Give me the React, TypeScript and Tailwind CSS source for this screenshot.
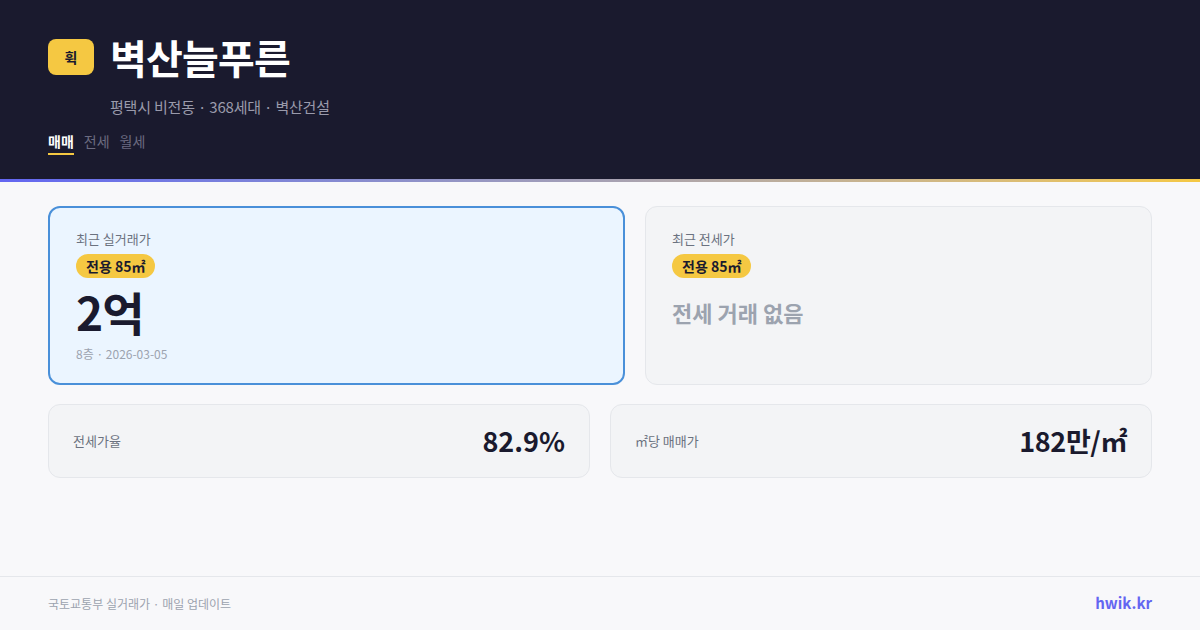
import React from "react";

const font = { fontFamily: '"Noto Sans CJK KR", "Noto Sans", sans-serif' };

export default function App() {
  return (
    <div className="w-[1200px] h-[630px] flex flex-col bg-[#f8f8fa]" style={font}>
      <header className="h-[179px] bg-[#1a1a2e] px-12 pt-[39px]">
        <div className="flex items-center gap-4 h-9">
          <div className="w-[46px] h-9 rounded-lg bg-[#f5c842] flex items-center justify-center text-[14px] font-bold text-[#1a1a2e]">
            휙
          </div>
          <h1 className="text-[40px] leading-[36px] font-bold text-white tracking-[-0.8px]">벽산늘푸른</h1>
        </div>
        <div className="pl-[62px] mt-[22px] text-[15px] leading-5 tracking-[-0.2px] text-[#9a9aab]">
          평택시 비전동 · 368세대 · 벽산건설
        </div>
        <div className="flex gap-[10px] mt-[15px] text-[14px] leading-[18px]">
          <span className="pb-[3px] border-b-2 border-[#f5c842] text-white font-bold">매매</span>
          <span className="pb-[3px] border-b-2 border-transparent text-[#6b6b80]">전세</span>
          <span className="pb-[3px] border-b-2 border-transparent text-[#6b6b80]">월세</span>
        </div>
      </header>
      <div className="h-[3px] bg-gradient-to-r from-[#6366f1] to-[#f5c842]" />
      <main className="flex-1 px-12 pt-6">
        <div className="flex gap-5">
          <div className="w-[577px] h-[179px] rounded-xl border-2 border-[#4a90d9] bg-[#ebf5ff] px-[26px] pt-[22px]">
            <div className="text-[13px] leading-[18px] text-[#6b7280]">최근 실거래가</div>
            <div className="mt-[6px] inline-block rounded-full bg-[#f5c842] px-[10px] py-1 text-[14px] leading-4 font-semibold text-[#1a1a2e]">
              전용 85㎡
            </div>
            <div className="mt-[8px] text-[46px] leading-[50px] font-bold text-[#1a1a2e] tracking-[-1px]">2억</div>
            <div className="mt-[10px] text-[12px] leading-4 text-[#9ca3af]">8층 · 2026-03-05</div>
          </div>
          <div className="flex-1 h-[179px] rounded-xl border border-[#e5e7eb] bg-[#f3f4f6] px-[26px] pt-[23px]">
            <div className="text-[13px] leading-[18px] text-[#6b7280]">최근 전세가</div>
            <div className="mt-[6px] inline-block rounded-full bg-[#f5c842] px-[10px] py-1 text-[14px] leading-4 font-semibold text-[#1a1a2e]">
              전용 85㎡
            </div>
            <div className="mt-[20px] text-[22px] leading-[28px] font-bold text-[#9ca3af]">전세 거래 없음</div>
          </div>
        </div>
        <div className="grid grid-cols-2 gap-5 mt-[19px]">
          <div className="h-[74px] rounded-xl border border-[#e5e7eb] bg-[#f3f4f6] px-[24px] flex items-center justify-between">
            <span className="text-[13px] text-[#6b7280]">전세가율</span>
            <span className="text-[27px] font-bold text-[#1a1a2e]">82.9%</span>
          </div>
          <div className="h-[74px] rounded-xl border border-[#e5e7eb] bg-[#f3f4f6] px-[24px] flex items-center justify-between">
            <span className="text-[13px] text-[#6b7280]">㎡당 매매가</span>
            <span className="text-[27px] font-bold text-[#1a1a2e] tracking-[-0.4px]">182만/㎡</span>
          </div>
        </div>
      </main>
      <footer className="h-[54px] border-t border-[#e5e7eb] px-12 flex items-center justify-between">
        <span className="text-[12px] text-[#9ca3af]">국토교통부 실거래가 · 매일 업데이트</span>
        <span className="text-[15px] font-bold text-[#6366f1]">hwik.kr</span>
      </footer>
    </div>
  );
}
